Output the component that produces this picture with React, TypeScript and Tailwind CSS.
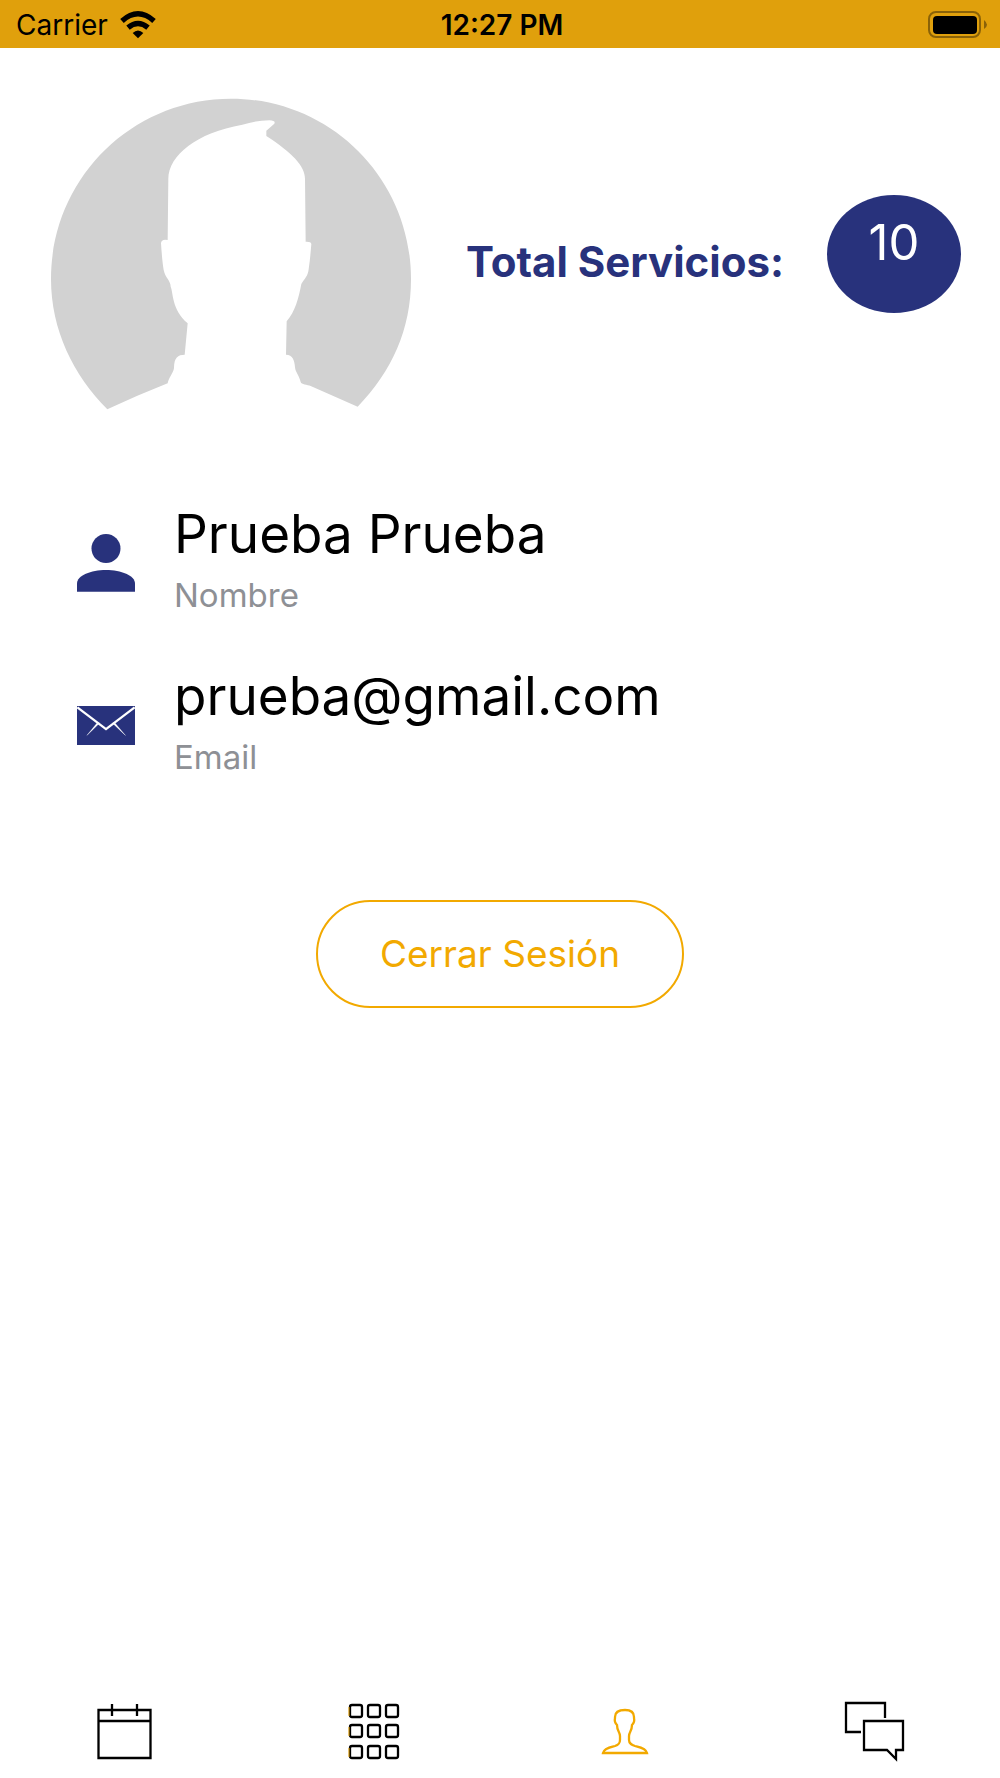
import type { ReactNode } from "react";

interface ProfileFieldProps {
    icon: ReactNode;
    value: string;
    label: string;
}

interface TabProps {
    label: string;
    active?: boolean;
    children: ReactNode;
}

function WifiIcon() {
    return (
        <svg viewBox="0 0 108 82" className="h-7 w-9" aria-hidden="true">
            <path d="M54 81 38 65Q54 50 70 65Z" />
            <path d="M24 49Q54 24 84 49" fill="none" stroke="currentColor" strokeWidth="16" />
            <path d="M6 29Q54-14 102 29" fill="none" stroke="currentColor" strokeWidth="16" />
        </svg>
    );
}

function BatteryIcon() {
    return (
        <svg viewBox="0 0 60 28" className="h-7 w-[60px]" aria-hidden="true">
            <rect x="1" y="2" width="51" height="25" rx="7" fill="none" stroke="#8a6208" strokeWidth="2" />
            <rect x="5" y="6" width="44" height="18" rx="4" />
            <path d="M56 10q6 5 0 9z" fill="#8a6208" />
        </svg>
    );
}

function Avatar() {
    return (
        <svg
            viewBox="60 54 1086 936"
            className="h-[312px] w-[362px] shrink-0"
            role="img"
            aria-label="Foto de perfil"
        >
            <path
                fill="#d2d2d2"
                d="M232 988C130 885 63 750 63 597C63 297 304 56 603 56S1143 297 1143 597C1143 750 1085 874 983 980L842 918C832 914 814 914 812 906C808 888 796 876 795 862C794 842 788 824 768 824L770 724C795 695 806 655 814 612C824 596 834 588 836 568C840 540 842 516 844 492Q843 484 827 485L825 296C825 258 786 218 709 168V152L733 131Q738 122 718 121C690 121 663 126 637 134C500 158 416 226 415 296L413 480Q394 476 393 490C395 518 397 546 401 570C406 594 422 602 422 620C430 636 424 688 473 730L464 824C444 824 432 832 432 864C430 880 416 892 413 910C352 934 292 960 232 988Z"
            />
        </svg>
    );
}

function PersonIcon() {
    return (
        <svg viewBox="0 0 176 176" className="size-[58px] fill-current" aria-hidden="true">
            <circle cx="88" cy="44" r="44" />
            <path d="M0 175V150C0 126 42 109 88 109S176 126 176 150V175Z" />
        </svg>
    );
}

function MailIcon() {
    return (
        <svg viewBox="0 0 176 118" className="h-[39px] w-[58px] fill-current" aria-hidden="true">
            <path d="M0 0H176V118H0Z" />
            <path d="M1 4 88 70 175 4" fill="none" stroke="white" strokeWidth="7" />
            <path d="M68 52 30 89 62 50ZM108 52 147 89 114 50Z" fill="white" stroke="white" strokeWidth="1" />
        </svg>
    );
}

function ProfileField({ icon, value, label }: ProfileFieldProps) {
    return (
        <div className="flex items-center gap-[39px]">
            <div className="w-[58px] shrink-0 pt-1 text-[#28327c]">
                {icon}
            </div>
            <dl className="flex flex-col-reverse">
                <dt className="text-[33px] leading-[54px] text-[#8e9095]">{label}</dt>
                <dd className="text-[53px] leading-[68px] text-black">{value}</dd>
            </dl>
        </div>
    );
}

function Tab({ label, active, children }: TabProps) {
    return (
        <a
            href="#"
            aria-label={label}
            aria-current={active ? "page" : undefined}
            className="flex justify-center"
        >
            <svg
                viewBox="0 0 64 64"
                className={active ? "size-16 text-[#f2a900]" : "size-16 text-black"}
                fill="none"
                stroke="currentColor"
                strokeWidth="2.3"
            >
                {children}
            </svg>
        </a>
    );
}

const gridRows = [5, 25, 46];
const gridCols = [7, 25, 43];

export default function App() {
    return (
        <div className="flex min-h-screen flex-col bg-white font-['Inter',sans-serif]">
            {/* Status bar */}
            <header className="grid h-12 grid-cols-3 items-center bg-[#e0a00c] pr-3 pl-4 text-black">
                <div className="flex items-center gap-3 pt-0.5">
                    <span className="text-[28px] leading-8">Carrier</span>
                    <WifiIcon />
                </div>
                <span className="pt-0.5 text-center text-[28px] leading-8 font-semibold">12:27 PM</span>
                <div className="flex justify-end">
                    <BatteryIcon />
                </div>
            </header>

            <main className="flex-1">
                {/* Avatar and service counter */}
                <section className="flex items-center pt-[50px] pr-[39px] pl-[50px]">
                    <Avatar />
                    <h1 className="flex-1 pt-4 pr-[43px] text-right text-[42px] leading-[52px] font-bold whitespace-nowrap text-[#28327c]">
                        Total Servicios:
                    </h1>
                    <div className="flex h-[118px] w-[134px] shrink-0 items-center justify-center rounded-[50%] bg-[#28327c] pb-[22px] text-[49px] leading-[56px] text-white">
                        10
                    </div>
                </section>

                {/* Account data */}
                <section className="flex flex-col gap-10 px-[77px] pt-[90px]">
                    <ProfileField icon={<PersonIcon />} value="Prueba Prueba" label="Nombre" />
                    <ProfileField icon={<MailIcon />} value="prueba@gmail.com" label="Email" />
                </section>

                <div className="flex justify-center pt-[116px]">
                    <button
                        type="button"
                        className="h-[108px] w-[368px] rounded-full border-2 border-[#f2a900] text-[37px] leading-[48px] text-[#f2a900]"
                    >
                        Cerrar Sesión
                    </button>
                </div>
            </main>

            {/* Tab bar */}
            <nav className="grid grid-cols-4 pb-[14px]">
                <Tab label="Calendario">
                    <path d="M5.5 10H57.5V58H5.5ZM5.5 21H57.5M19 4V16M44 4V16" />
                </Tab>
                <Tab label="Servicios">
                    {gridRows.map((y) =>
                        gridCols.map((x) => (
                            <rect key={`${x}-${y}`} x={x} y={y} width="12" height="12" rx="2" />
                        ))
                    )}
                    <path d="M6 7V16M6 27V36M6 48V57" stroke="#f2a900" strokeWidth="1" />
                </Tab>
                <Tab label="Perfil" active>
                    <path d="M10 53H54C53 48 46 47 42 46C39 45 36 44 36 40V36C36 32 39 31 39 25Q42 22 41 18V17C41 12 38 10 32 10S22 12 22 17V18Q21 22 24 25C24 31 27 32 27 36V40C27 44 25 45 22 46C18 47 11 48 10 53Z" />
                </Tab>
                <Tab label="Mensajes">
                    <path d="M18 32H3V3H42V18M21 21H60V50H53V59L44 50H21Z" />
                </Tab>
            </nav>
        </div>
    );
}
